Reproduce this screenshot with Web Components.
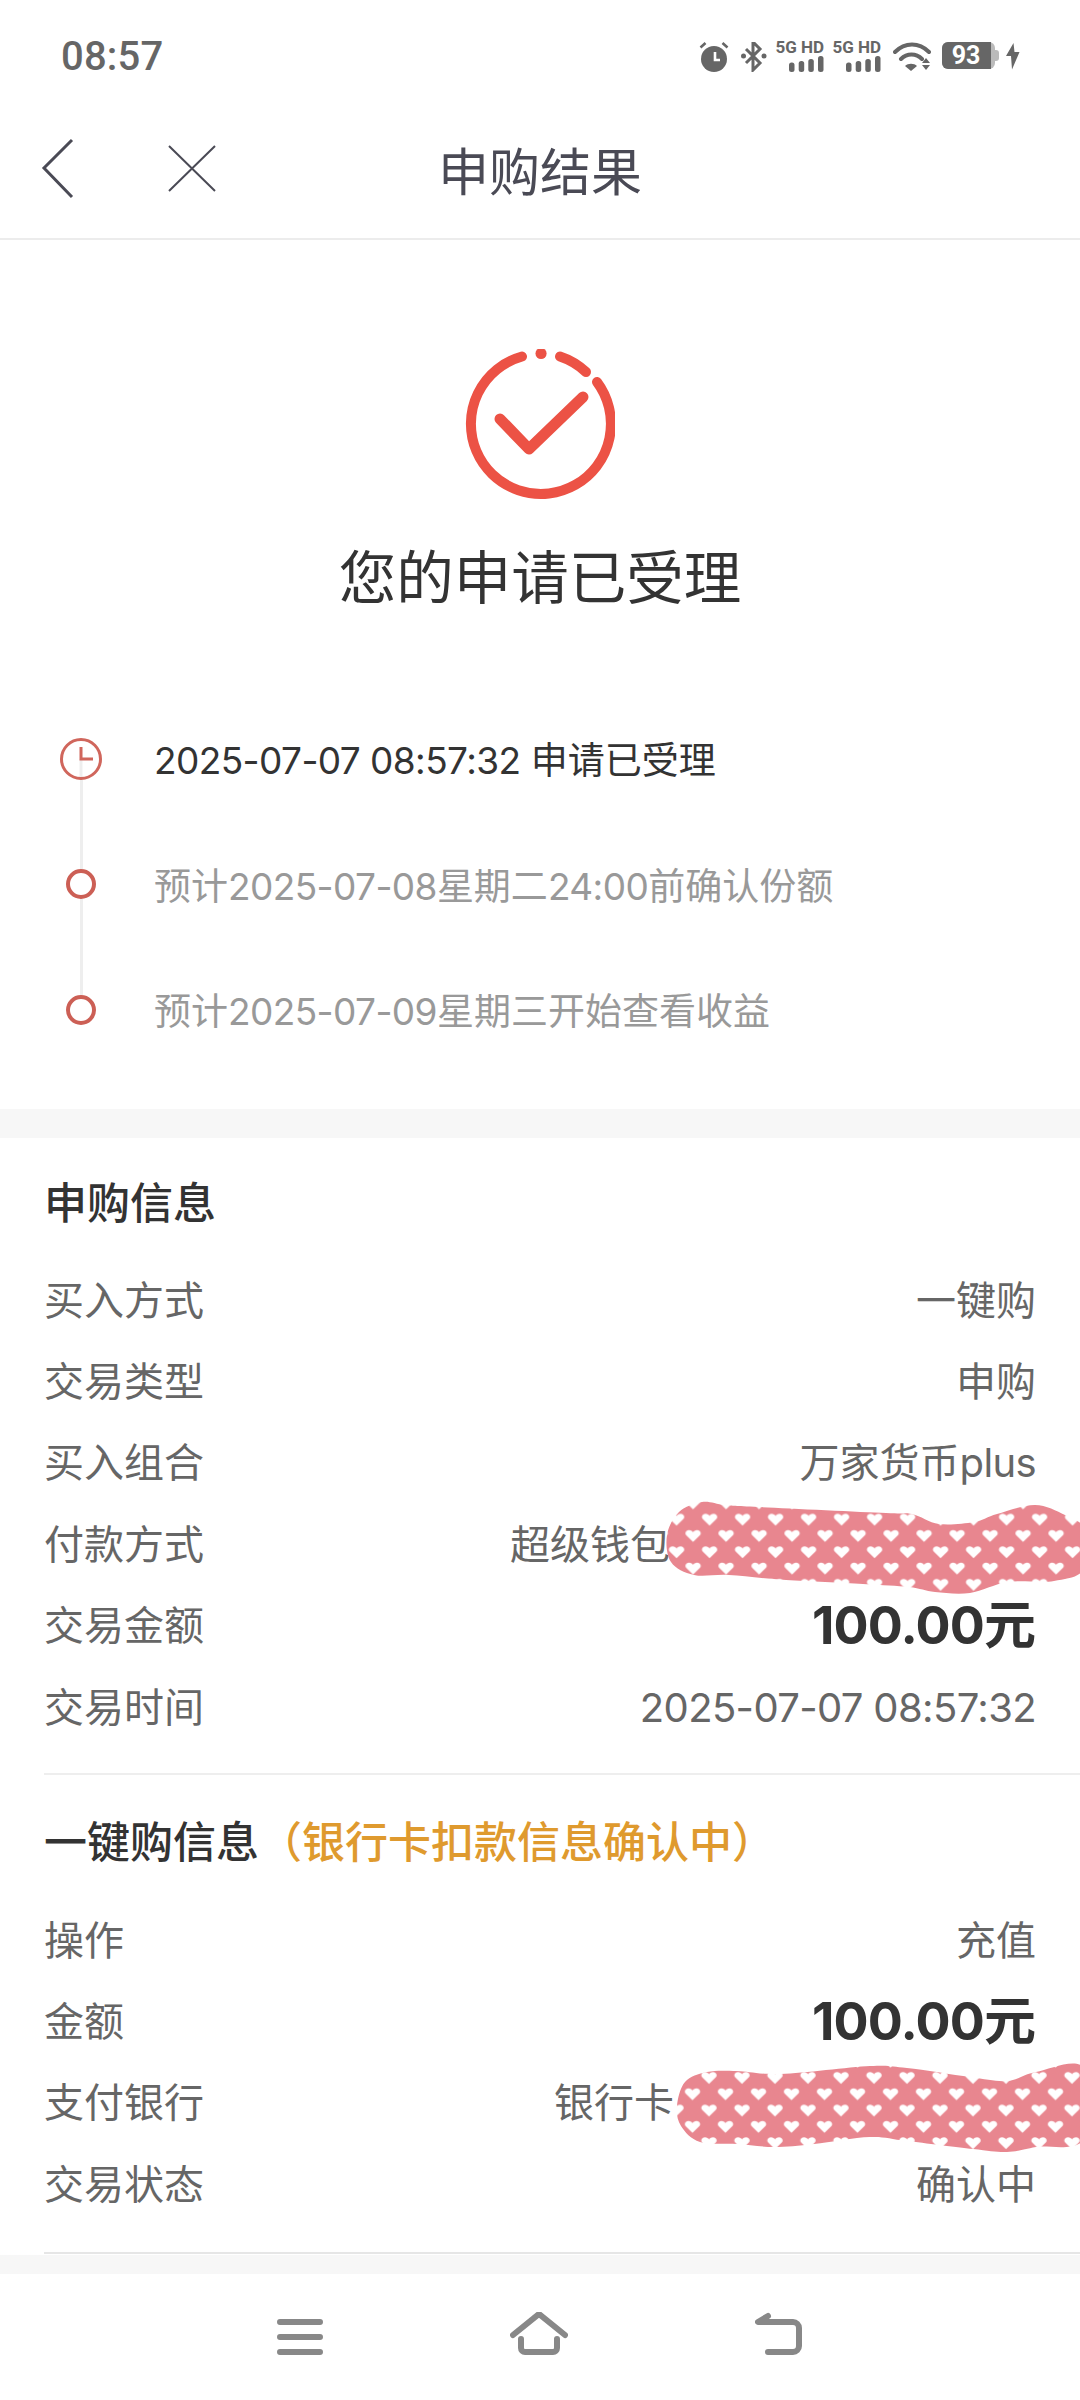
<!DOCTYPE html>
<html lang="zh-CN">
<head>
<meta charset="utf-8">
<title>申购结果</title>
<style>
  html, body { margin: 0; padding: 0; background: #fff; }
  body {
    width: 1080px;
    height: 2400px;
    overflow: hidden;
    display: flex;
    flex-direction: column;
    font-family: Inter, Roboto, "Noto Sans CJK SC", sans-serif;
  }
  body > * { flex: none; }
  bottom-nav { margin-top: auto; }
</style>
</head>
<body>
  <status-bar></status-bar>
  <nav-header>申购结果</nav-header>
  <result-hero>您的申请已受理</result-hero>
  <progress-timeline>
    <timeline-item kind="clock" first active><num-run>2025-07-07 08:57:32</num-run> 申请已受理</timeline-item>
    <timeline-item>预计<num-run>2025-07-08</num-run>星期二<num-run>24:00</num-run>前确认份额</timeline-item>
    <timeline-item last>预计<num-run>2025-07-09</num-run>星期三开始查看收益</timeline-item>
  </progress-timeline>
  <section-gap></section-gap>
  <info-section heading="申购信息" top="32" gap="30.500" bottom="25" rule="#eeeeee">
    <info-row label="买入方式">一键购</info-row>
    <info-row label="交易类型">申购</info-row>
    <info-row label="买入组合">万家货币<num-run>plus</num-run></info-row>
    <info-row label="付款方式">超级钱包<scribble-mask variant="wallet"></scribble-mask></info-row>
    <info-row label="交易金额" strong><num-run>100.00</num-run>元</info-row>
    <info-row label="交易时间"><num-run>2025-07-07 08:57:32</num-run></info-row>
  </info-section>
  <info-section heading="一键购信息" note="（银行卡扣款信息确认中）" top="34" gap="30.500" bottom="26.500" rule="#e6e6e6">
    <info-row label="操作">充值</info-row>
    <info-row label="金额" strong><num-run>100.00</num-run>元</info-row>
    <info-row label="支付银行">银行卡<scribble-mask variant="bank"></scribble-mask></info-row>
    <info-row label="交易状态">确认中</info-row>
  </info-section>
  <section-gap thin></section-gap>
  <bottom-nav></bottom-nav>

<script>
const statusBarTemplate = document.createElement('template');
statusBarTemplate.innerHTML = `
  <style>
    :host {
      display: flex;
      align-items: center;
      justify-content: space-between;
      height: 86px;
      padding: 14px 60px 0 61px;
      color: #666;
    }
    .time { font: 500 40px/1 Roboto, sans-serif; letter-spacing: .2px; }
    .icons { display: flex; align-items: flex-start; height: 40px; }
    svg { display: block; fill: #666; }
    .signal { display: flex; flex-direction: column; align-items: flex-end; width: 48px; margin-top: 3px; }
    .signal span { font: 700 17px/14px Roboto, sans-serif; white-space: nowrap; }
    .signal svg { margin-top: 2px; }
  </style>
  <div class="time">08:57</div>
  <div class="icons">
    <svg width="30" height="30" viewBox="699 43 30 30" style="margin-top:5px">
      <circle cx="714" cy="60" r="13"/>
      <path d="M715 53v8h5" fill="none" stroke="#fff" stroke-width="2.6"/>
      <path d="M700.500 48.500l5-4.500M727.500 48.500l-5-4.500" fill="none" stroke="#666" stroke-width="2.600"/>
    </svg>
    <svg width="26" height="30" viewBox="741 43 26 30" style="margin:5px 9px 0 12px">
      <path d="M746 50l14 14-7 7V43l7 7-14 14" fill="none" stroke="#666" stroke-width="3"/>
      <circle cx="743.500" cy="57" r="2.500"/><circle cx="764" cy="57" r="2.500"/>
    </svg>
    <div class="signal"><span>5G HD</span><svg width="35" height="16" viewBox="0 0 35 16"><rect y="6.500" width="5.500" height="9.500" rx="2.500"/><rect x="9.700" y="5" width="5.500" height="11" rx="2.500"/><rect x="19.300" y="3" width="5.500" height="13" rx="2.500"/><rect x="29" width="5.500" height="16" rx="2.500"/></svg></div>
    <div class="signal" style="margin-left:9px"><span>5G HD</span><svg width="35" height="16" viewBox="0 0 35 16"><rect y="6.500" width="5.500" height="9.500" rx="2.500"/><rect x="9.700" y="5" width="5.500" height="11" rx="2.500"/><rect x="19.300" y="3" width="5.500" height="13" rx="2.500"/><rect x="29" width="5.500" height="16" rx="2.500"/></svg></div>
    <svg width="38" height="30" viewBox="894 43 38 30" style="margin:5px 0 0 12px">
      <path d="M896 53c10-10 24-10 34 0M902 60c6-6 15-6 21 0" fill="none" stroke="#666" stroke-width="4" stroke-linecap="round"/>
      <path d="M906 67c3-3 9-3 12 0l-6 5z"/>
      <path d="M927 59l4 5h-8zM923 66h8l-4 5z"/>
    </svg>
    <svg width="58" height="28" viewBox="943 45 58 28" style="margin:5px 0 0 11px">
      <rect x="943" y="45" width="53" height="27" rx="6" fill="#bbb"/>
      <path d="M949 45h43v27h-43a6 6 0 0 1-6-6V51a6 6 0 0 1 6-6z"/>
      <path d="M996 53h1a3 3 0 0 1 3 3v5a3 3 0 0 1-3 3h-1z" fill="#bbb"/>
      <text x="967" y="67" text-anchor="middle" fill="#fff" style="font:700 25px Roboto,sans-serif">93</text>
    </svg>
    <svg width="15" height="28" viewBox="1005 45 15 28" style="margin:5px 0 0 5px">
      <path d="M1013.500 46l-7.500 13h5l1 13.500 7.500-17.500h-5z"/>
    </svg>
  </div>
`;
class StatusBarElement extends HTMLElement {
  constructor() {
    super();
    this.attachShadow({ mode: 'open' });
    this.shadowRoot.appendChild(statusBarTemplate.content.cloneNode(true));
  }
}
customElements.define('status-bar', StatusBarElement);

const navHeaderTemplate = document.createElement('template');
navHeaderTemplate.innerHTML = `
  <style>
    :host {
      display: grid;
      grid-template-columns: 1fr auto 1fr;
      align-items: center;
      height: 138px;
      border-bottom: 2px solid #ececec;
      color: #4a4a55;
    }
    .actions { display: flex; align-items: center; padding-left: 41px; }
    svg { display: block; }
    .title { font: 400 51px/1 "Noto Sans CJK SC", sans-serif; }
  </style>
  <div class="actions">
    <svg width="34" height="62" viewBox="41 137 34 62" style="margin-right:93px">
      <path d="M72 139L44 167l28 29" fill="none" stroke="#4a4a55" stroke-width="3"/>
    </svg>
    <svg width="48" height="48" viewBox="168 145 48 48">
      <path d="M169 146l46 45M215 146l-46 45" fill="none" stroke="#4a4a55" stroke-width="2"/>
    </svg>
  </div>
  <div class="title"><slot></slot></div>
  <div></div>
`;
class NavHeaderElement extends HTMLElement {
  constructor() {
    super();
    this.attachShadow({ mode: 'open' });
    this.shadowRoot.appendChild(navHeaderTemplate.content.cloneNode(true));
  }
}
customElements.define('nav-header', NavHeaderElement);

const resultHeroTemplate = document.createElement('template');
resultHeroTemplate.innerHTML = `
  <style>
    :host {
      display: flex;
      flex-direction: column;
      align-items: center;
      padding-top: 109px;
    }
    svg { display: block; }
    .text {
      margin-top: 35px;
      margin-bottom: 3px;
      font: 400 57.500px/80px "Noto Sans CJK SC", sans-serif;
      color: #333;
    }
  </style>
  <svg width="150" height="150" viewBox="465 349 150 150" fill="none" stroke="#ec5245" stroke-width="10" stroke-linecap="round" stroke-linejoin="round">
    <path d="M597 382A70 70 0 1 1 522 356.500"/>
    <path d="M541 353.500h.1" stroke-width="11"/>
    <path d="M560 356.500A70 70 0 0 1 586 372"/>
    <path d="M500 419l29 30 54-52" stroke-width="11"/>
  </svg>
  <div class="text"><slot></slot></div>
`;
class ResultHeroElement extends HTMLElement {
  constructor() {
    super();
    this.attachShadow({ mode: 'open' });
    this.shadowRoot.appendChild(resultHeroTemplate.content.cloneNode(true));
  }
}
customElements.define('result-hero', ResultHeroElement);

// latin and digit runs: the phone font sets these a touch tighter than Inter
class NumRunElement extends HTMLElement {
  constructor() {
    super();
    // no whitespace in here, the host is inline and it would show up as a space
    this.attachShadow({ mode: 'open' }).innerHTML =
      '<style>:host{display:inline;letter-spacing:-.016em}</style><slot></slot>';
  }
}
customElements.define('num-run', NumRunElement);

const progressTimelineTemplate = document.createElement('template');
progressTimelineTemplate.innerHTML = `
  <style>
    :host { display: block; padding: 79px 0 36px 55px; }
  </style>
  <slot></slot>
`;
class ProgressTimelineElement extends HTMLElement {
  constructor() {
    super();
    this.attachShadow({ mode: 'open' });
    this.shadowRoot.appendChild(progressTimelineTemplate.content.cloneNode(true));
  }
}
customElements.define('progress-timeline', ProgressTimelineElement);

const timelineItemTemplate = document.createElement('template');
timelineItemTemplate.innerHTML = `
  <style>
    :host {
      display: grid;
      grid-template-columns: 52px 1fr;
      column-gap: 47px;
      height: 125.500px;
      align-items: center;
      color: #999;
      font: 400 37px/50px Inter, Roboto, "Noto Sans CJK SC", sans-serif;
    }
    :host([active]) { color: #333; }
    .marker {
      display: flex;
      flex-direction: column;
      align-items: center;
      height: 100%;
    }
    .line { flex: 1; width: 3px; background: #eee; }
    :host([first]) .before, :host([last]) .after { background: transparent; }
    svg { display: block; flex: none; }
    .text { padding-top: 5px; }
  </style>
  <div class="marker">
    <div class="line before"></div>
    <span class="dot"></span>
    <div class="line after"></div>
  </div>
  <div class="text"><slot></slot></div>
`;
class TimelineItemElement extends HTMLElement {
  constructor() {
    super();
    this.attachShadow({ mode: 'open' });
    this.shadowRoot.appendChild(timelineItemTemplate.content.cloneNode(true));
  }

  connectedCallback() {
    const dot = this.shadowRoot.querySelector('.dot');
    if (this.getAttribute('kind') === 'clock') {
      dot.outerHTML = `<svg width="42" height="42" viewBox="0 0 42 42" fill="none">
        <path d="M21 21v20" stroke="#eee" stroke-width="3"/>
        <circle cx="21" cy="21" r="19.500" stroke="#d0665c" stroke-width="3"/>
        <path d="M21 9v12h12" stroke="#d0665c" stroke-width="3"/>
      </svg>`;
    } else {
      dot.outerHTML = `<svg width="30" height="30" viewBox="0 0 30 30" fill="none">
        <circle cx="15" cy="15" r="13" stroke="#cc5f55" stroke-width="4"/>
      </svg>`;
    }
  }
}
customElements.define('timeline-item', TimelineItemElement);

const sectionGapTemplate = document.createElement('template');
sectionGapTemplate.innerHTML = `
  <style>
    :host { display: block; height: 29px; background: #f7f7f7; }
    :host([thin]) { height: 19px; margin-top: 1px; }
  </style>
`;
class SectionGapElement extends HTMLElement {
  constructor() {
    super();
    this.attachShadow({ mode: 'open' });
    this.shadowRoot.appendChild(sectionGapTemplate.content.cloneNode(true));
  }
}
customElements.define('section-gap', SectionGapElement);

const infoSectionTemplate = document.createElement('template');
infoSectionTemplate.innerHTML = `
  <style>
    :host { display: block; padding: 0 44px 0 44px; }
    .rule { height: 2px; margin: 0 -44px 0 0; }
    .heading {
      font: 500 43px/60px "Noto Sans CJK SC", sans-serif;
      color: #333;
      white-space: nowrap;
    }
    .note { color: #df9a2e; }
  </style>
  <div class="inner">
    <div class="heading"><span class="title"></span><span class="note"></span></div>
    <div class="rows"><slot></slot></div>
  </div>
  <div class="rule"></div>
`;
class InfoSectionElement extends HTMLElement {
  constructor() {
    super();
    this.attachShadow({ mode: 'open' });
    this.shadowRoot.appendChild(infoSectionTemplate.content.cloneNode(true));
  }

  connectedCallback() {
    const root = this.shadowRoot;
    root.querySelector('.title').textContent = this.getAttribute('heading');
    root.querySelector('.note').textContent = this.getAttribute('note') || '';
    root.querySelector('.inner').style.padding = `${this.getAttribute('top')}px 0 ${this.getAttribute('bottom')}px`;
    root.querySelector('.rows').style.marginTop = `${this.getAttribute('gap')}px`;
    root.querySelector('.rule').style.background = this.getAttribute('rule');
  }
}
customElements.define('info-section', InfoSectionElement);

const infoRowTemplate = document.createElement('template');
infoRowTemplate.innerHTML = `
  <style>
    :host {
      display: flex;
      align-items: center;
      justify-content: space-between;
      height: 81.400px;
      font: 400 40px/50px Inter, Roboto, "Noto Sans CJK SC", sans-serif;
      color: #666;
      white-space: nowrap;
    }
    .value { display: flex; align-items: center; }
    :host([strong]) .value { font-size: 52px; font-weight: 700; color: #333; }
  </style>
  <div class="label"></div>
  <div class="value"><slot></slot></div>
`;
class InfoRowElement extends HTMLElement {
  constructor() {
    super();
    this.attachShadow({ mode: 'open' });
    this.shadowRoot.appendChild(infoRowTemplate.content.cloneNode(true));
  }

  connectedCallback() {
    this.shadowRoot.querySelector('.label').textContent = this.getAttribute('label');
  }
}
customElements.define('info-row', InfoRowElement);

// hand drawn privacy scribbles, traced from the screenshot
const SCRIBBLES = {
  wallet: {
    box: [670, 1492, 410, 102],
    anchor: [709.600, 1517.700],
    points: [[667,1533],[679,1510],[702,1500],[725,1503],[759,1505],[886,1511],[912,1512],[939,1522],[974,1520],[997,1512],[1035,1503],[1065,1513],[1084,1527],[1084,1567],[1054,1579],[1008,1580],[970,1591],[935,1590],[909,1585],[863,1582],[786,1578],[729,1573],[694,1573],[671,1560]]
  },
  bank: {
    box: [674, 2053, 406, 102],
    anchor: [709, 2079],
    points: [[677,2107],[685,2083],[707,2073],[737,2072],[781,2075],[870,2067],[907,2069],[970,2078],[1007,2082],[1036,2073],[1084,2069],[1084,2140],[1036,2148],[1007,2153],[973,2150],[907,2142],[870,2138],[814,2145],[774,2148],[737,2145],[700,2143],[681,2127]]
  }
};

class ScribbleMaskElement extends HTMLElement {
  constructor() {
    super();
    this.attachShadow({ mode: 'open' });
  }

  connectedCallback() {
    const variant = this.getAttribute('variant');
    const data = SCRIBBLES[variant];
    const [x, y, w, h] = data.box;
    const heart = 'M0 6L-6.600-.4C-9-3-7-6-4-6-2-6-.8-5 0-3.800.8-5 2-6 4-6 7-6 9-3 6.600-.4Z';
    this.shadowRoot.innerHTML = `
      <style>
        :host { display: block; flex: none; width: ${w}px; height: ${h}px; margin: -26px -44px -26px 0; }
        svg { display: block; overflow: visible; }
      </style>
      <svg width="${w}" height="${h}" viewBox="${x} ${y} ${w} ${h}">
        <defs>
          <pattern id="hearts-${variant}" patternUnits="userSpaceOnUse" width="33" height="32.600"
                   x="${data.anchor[0] - 8.25}" y="${data.anchor[1] - 8.15}">
            <rect width="33" height="32.600" fill="#e8868f"/>
            <path d="${heart}" transform="translate(8.250 8.150)" fill="#fff"/>
            <path d="${heart}" transform="translate(24.750 24.450)" fill="#fff"/>
            <path d="${heart}" transform="translate(-8.250 24.450)" fill="#fff"/>
            <path d="${heart}" transform="translate(41.250 8.150)" fill="#fff"/>
          </pattern>
        </defs>
        <path d="${this.smoothPath(data.points)}" fill="url(#hearts-${variant})"/>
      </svg>`;
  }

  smoothPath(pts) {
    // closed catmull-rom, good enough for a wobbly marker edge
    const n = pts.length;
    let d = `M${pts[0][0]} ${pts[0][1]}`;
    for (let i = 0; i < n; i++) {
      const p0 = pts[(i - 1 + n) % n], p1 = pts[i], p2 = pts[(i + 1) % n], p3 = pts[(i + 2) % n];
      const c1x = p1[0] + (p2[0] - p0[0]) / 6, c1y = p1[1] + (p2[1] - p0[1]) / 6;
      const c2x = p2[0] - (p3[0] - p1[0]) / 6, c2y = p2[1] - (p3[1] - p1[1]) / 6;
      d += `C${c1x.toFixed(1)} ${c1y.toFixed(1)} ${c2x.toFixed(1)} ${c2y.toFixed(1)} ${p2[0]} ${p2[1]}`;
    }
    return d + 'Z';
  }
}
customElements.define('scribble-mask', ScribbleMaskElement);

const bottomNavTemplate = document.createElement('template');
bottomNavTemplate.innerHTML = `
  <style>
    :host {
      display: flex;
      justify-content: center;
      align-items: flex-start;
      gap: 187px;
      height: 126px;
      box-sizing: border-box;
      padding-top: 38px;
      background: #fff;
    }
    svg { display: block; fill: none; stroke: #888; stroke-width: 6; stroke-linecap: round; stroke-linejoin: round; }
  </style>
  <svg width="46" height="44" viewBox="277 2312 46 44"><path d="M280 2322h40M280 2337h40M280 2352h40"/></svg>
  <svg width="58" height="44" viewBox="511 2312 58 44"><path d="M514 2335l26-21 26 21"/><path d="M522 2339v9a4 4 0 0 0 4 4h28a4 4 0 0 0 4-4v-9"/></svg>
  <svg width="48" height="44" viewBox="756 2312 48 44"><path d="M769 2316l-10 6h35a6 6 0 0 1 6 6v18a6 6 0 0 1-6 6h-25"/></svg>
`;
class BottomNavElement extends HTMLElement {
  constructor() {
    super();
    this.attachShadow({ mode: 'open' });
    this.shadowRoot.appendChild(bottomNavTemplate.content.cloneNode(true));
  }
}
customElements.define('bottom-nav', BottomNavElement);
</script>
</body>
</html>
